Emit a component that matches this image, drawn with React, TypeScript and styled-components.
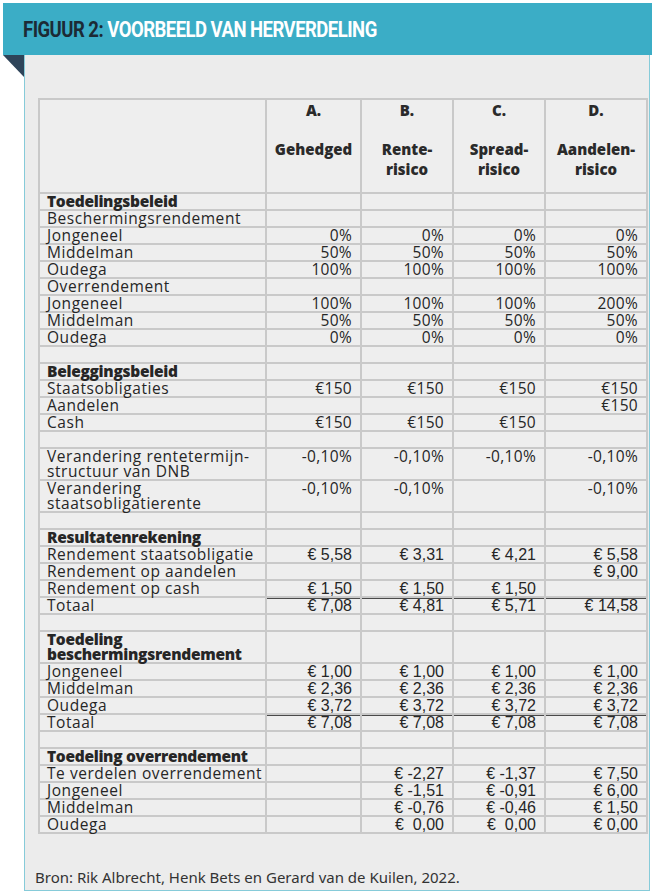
import React from "react";
import styled, { createGlobalStyle } from "styled-components";

const Global = createGlobalStyle`
  html, body { margin: 0; padding: 0; background: #ffffff; }
  body { font-family: "Open Sans", "Noto Sans", sans-serif; }
`;

const Frame = styled.div`
  width: 649px;
  padding: 3px 0 0 3px;
`;

const Header = styled.header`
  height: 52px;
  background: #3badc6;
  display: flex;
  align-items: center;
  padding-left: 20px;
  box-sizing: border-box;
`;

const Title = styled.h1`
  margin: 0;
  font-family: "Roboto", "Liberation Sans", sans-serif;
  font-weight: 700;
  font-size: 21.5px;
  letter-spacing: -0.6px;
  color: #ffffff;
  transform: scaleX(0.86);
  transform-origin: left center;
  white-space: nowrap;
`;

const TitleLead = styled.span`
  color: #1c2a35;
`;

const Body = styled.div`
  display: flex;
  align-items: flex-start;
`;

const Fold = styled.div`
  width: 21px;
  height: 22px;
  flex: none;
  background: #2e4459;
  clip-path: polygon(0 0, 100% 0, 100% 100%);
`;

const Panel = styled.section`
  width: 626px;
  height: 836px;
  box-sizing: border-box;
  background: #ececec;
  border: 1px solid #86cbd9;
  border-top: none;
  padding: 43px 0 0 10px;
  display: flex;
  flex-direction: column;
`;

const Table = styled.table`
  margin-left: 3px;
  width: 608px;
  table-layout: fixed;
  border-collapse: collapse;
  border: 2px solid #c9c9c9;
  background: #eeeeee;
  color: #2b2b2b;
`;

const HeadCell = styled.th`
  border: 2px solid #c9c9c9;
  height: 91px;
  padding: 1px 2px 0;
  vertical-align: top;
  text-align: center;
  font-weight: 800;
  font-size: 15px;
  line-height: 19.5px;
  color: #2a2a2a;
  white-space: pre-line;
`;

const Label = styled.td<{ $bold?: boolean }>`
  border: 2px solid #c9c9c9;
  padding: 0 2px 0 7px;
  font-size: 15.5px;
  line-height: 15px;
  letter-spacing: ${(p) => (p.$bold ? "-0.3px" : "0.55px")};
  font-weight: ${(p) => (p.$bold ? 800 : 400)};
  vertical-align: top;
  white-space: pre;
  overflow: visible;
  color: #262626;
`;

const Value = styled.td<{ $money?: boolean; $total?: boolean }>`
  border: 2px solid #c9c9c9;
  padding: 0 8px 0 4px;
  text-align: right;
  vertical-align: top;
  white-space: pre;
  font-family: ${(p) =>
    p.$money ? '"Liberation Sans", Arial, sans-serif' : '"Open Sans", "Noto Sans", sans-serif'};
  font-size: ${(p) => (p.$money ? "16px" : "15.5px")};
  letter-spacing: ${(p) => (p.$money ? "0" : "0.3px")};
  line-height: 15px;
  color: #262626;
  box-shadow: ${(p) => (p.$total ? "inset 0 1px 0 #4a4a4a" : "none")};
`;

const Source = styled.p`
  margin: 34px 0 0;
  font-family: "Noto Sans", "Open Sans", sans-serif;
  font-size: 15px;
  line-height: 18px;
  color: #333333;
`;

type Row =
  | { kind: "empty" }
  | {
      kind: "section" | "item";
      label: string;
      values?: string[];
      money?: boolean;
      total?: boolean;
    };

const pct = (v: string) => [v, v, v, v];
const NBSP = "\u00a0";

const rows: Row[] = [
  { kind: "section", label: "Toedelingsbeleid" },
  { kind: "item", label: "Beschermingsrendement" },
  { kind: "item", label: "Jongeneel", values: pct("0%") },
  { kind: "item", label: "Middelman", values: pct("50%") },
  { kind: "item", label: "Oudega", values: pct("100%") },
  { kind: "item", label: "Overrendement" },
  { kind: "item", label: "Jongeneel", values: ["100%", "100%", "100%", "200%"] },
  { kind: "item", label: "Middelman", values: pct("50%") },
  { kind: "item", label: "Oudega", values: pct("0%") },
  { kind: "empty" },
  { kind: "section", label: "Beleggingsbeleid" },
  { kind: "item", label: "Staatsobligaties", values: pct("€150") },
  { kind: "item", label: "Aandelen", values: ["", "", "", "€150"] },
  { kind: "item", label: "Cash", values: ["€150", "€150", "€150", ""] },
  { kind: "empty" },
  {
    kind: "item",
    label: "Verandering rentetermijn-\nstructuur van DNB",
    values: pct("-0,10%"),
  },
  {
    kind: "item",
    label: "Verandering\nstaatsobligatierente",
    values: ["-0,10%", "-0,10%", "", "-0,10%"],
  },
  { kind: "empty" },
  { kind: "section", label: "Resultatenrekening" },
  {
    kind: "item",
    label: "Rendement staatsobligatie",
    values: ["€ 5,58", "€ 3,31", "€ 4,21", "€ 5,58"],
    money: true,
  },
  { kind: "item", label: "Rendement op aandelen", values: ["", "", "", "€ 9,00"], money: true },
  {
    kind: "item",
    label: "Rendement op cash",
    values: ["€ 1,50", "€ 1,50", "€ 1,50", ""],
    money: true,
  },
  {
    kind: "item",
    label: "Totaal",
    values: ["€ 7,08", "€ 4,81", "€ 5,71", "€ 14,58"],
    money: true,
    total: true,
  },
  { kind: "empty" },
  { kind: "section", label: "Toedeling\nbeschermingsrendement" },
  { kind: "item", label: "Jongeneel", values: pct("€ 1,00"), money: true },
  { kind: "item", label: "Middelman", values: pct("€ 2,36"), money: true },
  { kind: "item", label: "Oudega", values: pct("€ 3,72"), money: true },
  { kind: "item", label: "Totaal", values: pct("€ 7,08"), money: true, total: true },
  { kind: "empty" },
  { kind: "section", label: "Toedeling overrendement" },
  {
    kind: "item",
    label: "Te verdelen overrendement",
    values: ["", "€ -2,27", "€ -1,37", "€ 7,50"],
    money: true,
  },
  {
    kind: "item",
    label: "Jongeneel",
    values: ["", "€ -1,51", "€ -0,91", "€ 6,00"],
    money: true,
  },
  {
    kind: "item",
    label: "Middelman",
    values: ["", "€ -0,76", "€ -0,46", "€ 1,50"],
    money: true,
  },
  {
    kind: "item",
    label: "Oudega",
    values: ["", "€  0,00", "€  0,00", "€ 0,00"],
    money: true,
  },
];

const columns = [
  { letter: "A.", name: "Gehedged" },
  { letter: "B.", name: "Rente-\nrisico" },
  { letter: "C.", name: "Spread-\nrisico" },
  { letter: "D.", name: "Aandelen-\nrisico" },
];

export default function App() {
  return (
    <>
      <Global />
      <Frame>
        <Header>
          <Title>
            <TitleLead>FIGUUR 2:</TitleLead> VOORBEELD VAN HERVERDELING
          </Title>
        </Header>
        <Body>
          <Fold />
          <Panel>
            <Table>
              <colgroup>
                <col style={{ width: 227 }} />
                <col style={{ width: 95 }} />
                <col style={{ width: 92 }} />
                <col style={{ width: 92 }} />
                <col style={{ width: 102 }} />
              </colgroup>
              <thead>
                <tr>
                  <HeadCell />
                  {columns.map((c) => (
                    <HeadCell key={c.letter}>{`${c.letter}\n\n${c.name}`}</HeadCell>
                  ))}
                </tr>
              </thead>
              <tbody>
                {rows.map((r, i) =>
                  r.kind === "empty" ? (
                    <tr key={i}>
                      <Label>{NBSP}</Label>
                      <Value />
                      <Value />
                      <Value />
                      <Value />
                    </tr>
                  ) : (
                    <tr key={i}>
                      <Label $bold={r.kind === "section"}>{r.label}</Label>
                      {(r.values ?? ["", "", "", ""]).map((v, j) => (
                        <Value key={j} $money={r.money} $total={r.total}>
                          {v}
                        </Value>
                      ))}
                    </tr>
                  )
                )}
              </tbody>
            </Table>
            <Source>Bron: Rik Albrecht, Henk Bets en Gerard van de Kuilen, 2022.</Source>
          </Panel>
        </Body>
      </Frame>
    </>
  );
}
